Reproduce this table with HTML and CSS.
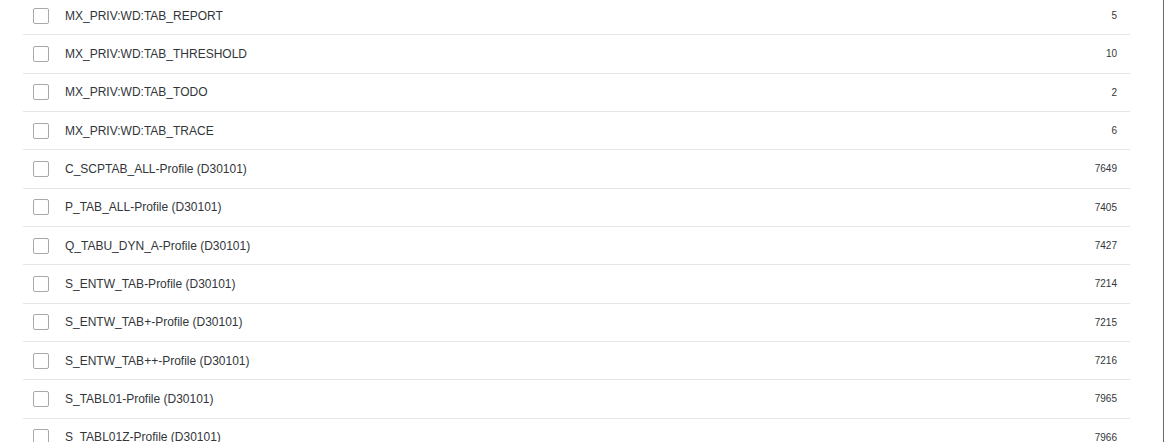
FILE: index.html
```html
<!DOCTYPE html>
<html>
<head>
<meta charset="utf-8">
<link rel="stylesheet" href="styles.css">
</head>
<body>
<div class="page">
  <ul class="list">
    <li class="row"><span class="check"></span><span class="label">MX_PRIV:WD:TAB_REPORT</span><span class="count">5</span></li>
    <li class="row"><span class="check"></span><span class="label">MX_PRIV:WD:TAB_THRESHOLD</span><span class="count">10</span></li>
    <li class="row"><span class="check"></span><span class="label">MX_PRIV:WD:TAB_TODO</span><span class="count">2</span></li>
    <li class="row"><span class="check"></span><span class="label">MX_PRIV:WD:TAB_TRACE</span><span class="count">6</span></li>
    <li class="row"><span class="check"></span><span class="label">C_SCPTAB_ALL-Profile (D30101)</span><span class="count">7649</span></li>
    <li class="row"><span class="check"></span><span class="label">P_TAB_ALL-Profile (D30101)</span><span class="count">7405</span></li>
    <li class="row"><span class="check"></span><span class="label">Q_TABU_DYN_A-Profile (D30101)</span><span class="count">7427</span></li>
    <li class="row"><span class="check"></span><span class="label">S_ENTW_TAB-Profile (D30101)</span><span class="count">7214</span></li>
    <li class="row"><span class="check"></span><span class="label">S_ENTW_TAB+-Profile (D30101)</span><span class="count">7215</span></li>
    <li class="row"><span class="check"></span><span class="label">S_ENTW_TAB++-Profile (D30101)</span><span class="count">7216</span></li>
    <li class="row"><span class="check"></span><span class="label">S_TABL01-Profile (D30101)</span><span class="count">7965</span></li>
    <li class="row"><span class="check"></span><span class="label">S_TABL01Z-Profile (D30101)</span><span class="count">7966</span></li>
  </ul>
  <div class="scrollbar"></div>
</div>
</body>
</html>
```

FILE: styles.css
```css
html, body {
  margin: 0;
  padding: 0;
  background: #ffffff;
  overflow: hidden;
}
body {
  font-family: "Liberation Sans", Arial, sans-serif;
  color: #32363a;
}
.page {
  display: flex;
  height: 442px;
  overflow: hidden;
}
.list {
  list-style: none;
  margin: -3px 0 0 23px;
  padding: 0;
  width: 1107px;
  flex: none;
}
.row {
  display: flex;
  align-items: center;
  box-sizing: border-box;
  height: 38.33px;
  border-bottom: 1px solid #e5e5e5;
  padding: 0 13px 0 10px;
}
.check {
  flex: none;
  width: 16px;
  height: 16px;
  box-sizing: border-box;
  border: 1px solid #a8a8a8;
  border-radius: 2px;
  background: #fff;
  margin-right: 16px;
}
.label {
  flex: 1;
  font-size: 12px;
  white-space: nowrap;
}
.count {
  font-size: 10px;
  text-align: right;
}
.scrollbar {
  margin-left: auto;
  width: 1px;
  height: 100%;
  background: #6a6a6a;
}
```
